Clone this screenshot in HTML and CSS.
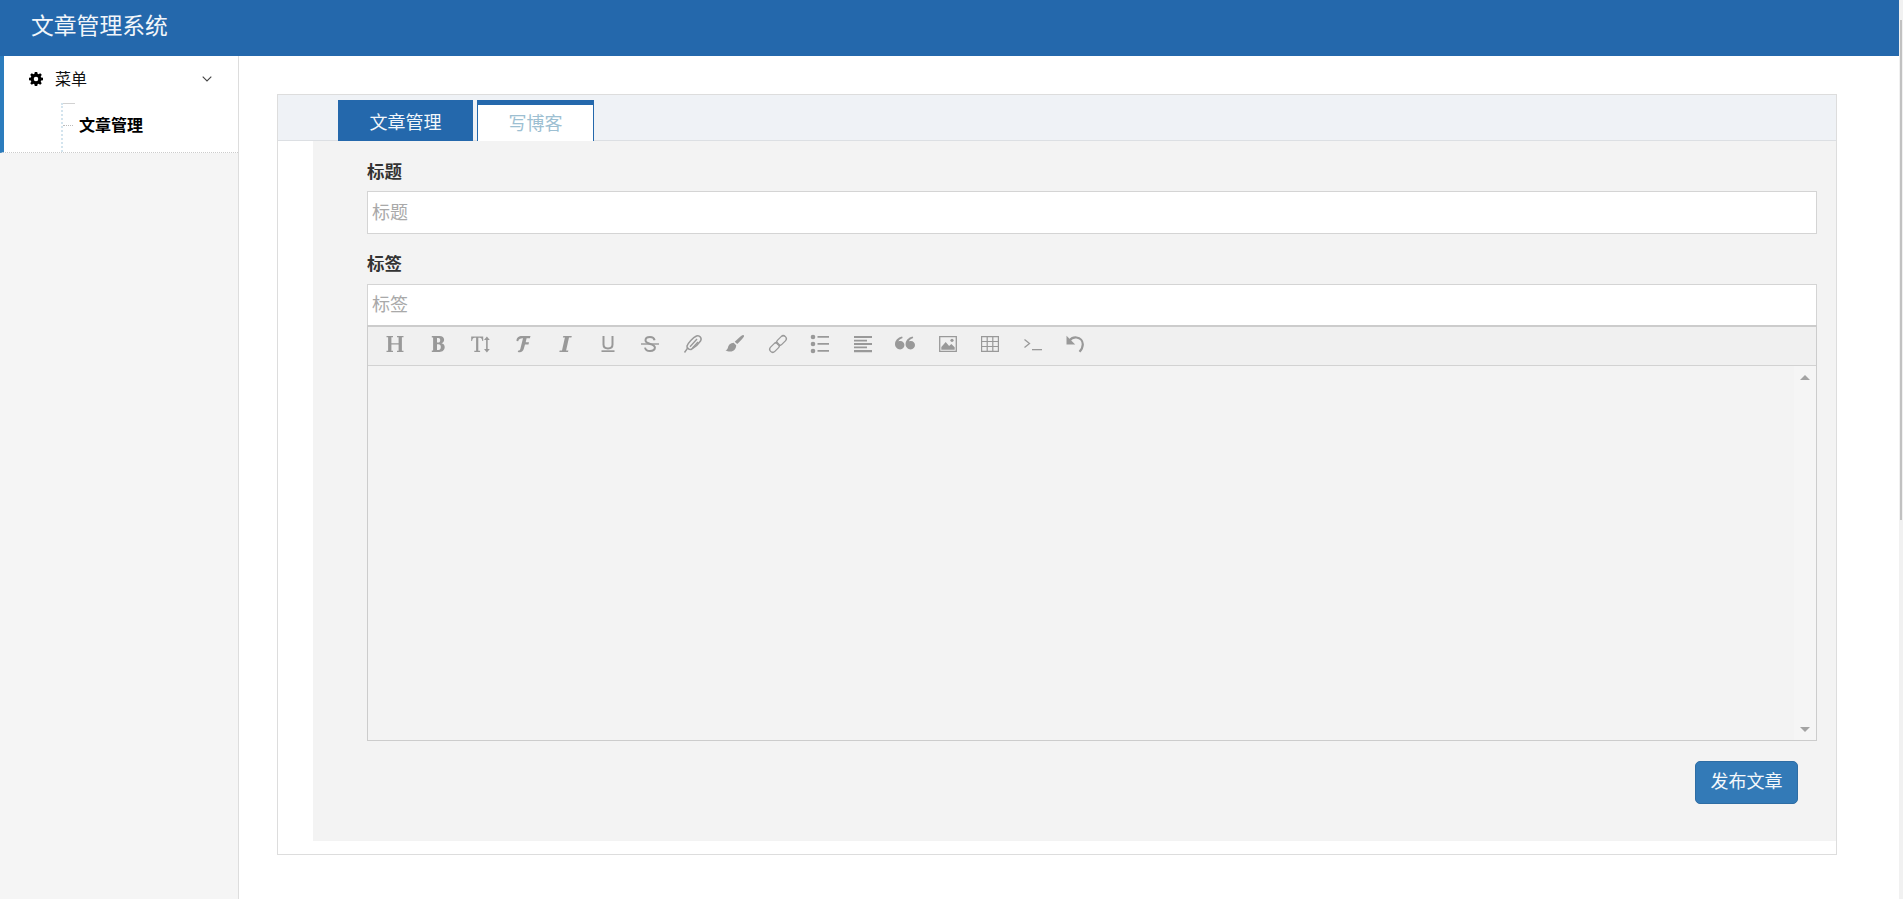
FILE: index.html
```html
<!DOCTYPE html>
<html lang="zh">
<head>
<meta charset="utf-8">
<title>文章管理系统</title>
<link rel="stylesheet" href="styles.css">
</head>
<body>
<div class="page">
  <div class="app">
    <header class="topbar"><span class="brand">文章管理系统</span></header>
    <div class="layout">
      <nav class="sidebar">
        <div class="menu">
          <div class="menu-head">
            <svg class="gear" viewBox="0 0 16 16" width="14" height="14"><path fill="#000" fill-rule="evenodd" d="M6.6 0h2.8l.4 2.1 1.2.5L12.800 1.400l1.800 1.800-1.200 1.800.5 1.200 2.100.4v2.800l-2.100.4-.5 1.200 1.200 1.800-1.800 1.800-1.800-1.200-1.200.5-.4 2.100H6.600l-.4-2.100-1.200-.5-1.800 1.200-1.800-1.800 1.200-1.800-.5-1.200L0 9.400V6.600l2.100-.4.5-1.200-1.200-1.800 1.800-1.800L5 2.600l1.200-.5zM8 5.400a2.600 2.600 0 1 0 0 5.200 2.600 2.600 0 0 0 0-5.200z"/></svg>
            <span class="menu-title">菜单</span>
            <svg class="chev" viewBox="0 0 10 6" width="10" height="6"><path d="M.7.7 5 5 9.300.7" fill="none" stroke="#444" stroke-width="1.100"/></svg>
          </div>
          <div class="tree">
            <div class="tree-cap"></div>
            <div class="tree-row"><span class="tree-tick"></span><span class="tree-link">文章管理</span></div>
          </div>
        </div>
      </nav>
      <main class="main">
        <section class="panel">
          <div class="tabs">
            <div class="tab tab-active">文章管理</div>
            <div class="tab tab-other">写博客</div>
          </div>
          <div class="tab-body">
            <form class="form">
              <label class="field-label label-first">标题</label>
              <input class="text-input input-title" placeholder="标题">
              <label class="field-label label-second">标签</label>
              <input class="text-input input-tags" placeholder="标签">
              <div class="editor">
                <div class="toolbar">
                  <span class="tool"><svg viewBox="0 0 20 20" width="20" height="20"><path d="M1.500 2h6.500v1.300H6.400v5.900h7.200V3.300H12V2h6.500v1.300h-1.600v13.400h1.600V18H12v-1.300h1.600v-6.100H6.400v6.100H8V18H1.500v-1.300h1.600V3.300H1.500z" fill="#999"/></svg></span>
                  <span class="tool"><svg viewBox="0 0 20 20" width="20" height="20"><path fill="#999" fill-rule="evenodd" d="M3.800 2h7.800c2.800 0 4.500 1.400 4.500 3.800 0 1.700-1 2.900-2.600 3.400 2 .4 3.200 1.900 3.200 3.900 0 3-2.100 4.900-5.200 4.900H3.800v-1.500h1.300V3.500H3.800zM9 4v4.600h1.200c1.300 0 2-.8 2-2.300S11.500 4 10.200 4zm0 6.300V16h1.500c1.500 0 2.300-1 2.300-2.900s-.8-2.800-2.300-2.800z"/></svg></span>
                  <span class="tool"><svg viewBox="0 0 20 20" width="20" height="20"><path fill="#999" transform="translate(1.200 0)" d="M0 2.500h12v4.500h-.9c-.3-2-1-3.200-2.600-3.200H7.100v12.900h1.800V18H3.100v-1.300h1.800V3.800H3.500C1.900 3.800 1.200 5 .9 7H0zM15.700 2.500l2.900 3.600h-2.100v8.800h2.100L15.700 18.500l-2.900-3.600h2.100V6.100h-2.100z"/></svg></span>
                  <span class="tool"><svg viewBox="0 0 20 20" width="20" height="20"><path fill="#999" d="M3.500 7C3.400 3.800 5.700 2 9 2h8.500l-.6 2.300h-3.300L12.700 8.300h3.300l-.5 2.100H12l-1.200 4.400C10.100 17 8.800 18.300 6.700 18.300c-.8 0-1.500-.2-2-.6l.9-1.400c.7.400 1.400.1 1.700-1.200L10 4.300C7.500 4.200 5.800 4.900 5.200 7.300z"/></svg></span>
                  <span class="tool"><svg viewBox="0 0 20 20" width="20" height="20"><path fill="#999" d="M8.300 2h8.500l-.4 1.600H14L11.100 16.400h2.300l-.4 1.600H4.300l.4-1.600H7L9.900 3.600H7.900z"/></svg></span>
                  <span class="tool"><svg viewBox="0 0 20 20" width="20" height="20"><path fill="none" stroke="#999" stroke-width="2" d="M5.500 2v8.500c0 2.800 1.800 3.900 4.500 3.900s4.500-1.100 4.500-3.900V2"/><path fill="#999" d="M3.500 16.300h13V18h-13z"/></svg></span>
                  <span class="tool"><svg viewBox="0 0 20 20" width="20" height="20"><path fill="none" stroke="#999" stroke-width="2" d="M14.600 6.200C14.100 4 12.300 3 10 3 7.300 3 5.500 4.200 5.500 6.300c0 4.500 9.400 2.900 9.400 7.300 0 2.100-1.900 3.400-4.900 3.400-2.600 0-4.500-1.200-5-3.400"/><path fill="#999" d="M1 9.300h18v1.400H1z"/></svg></span>
                  <span class="tool"><svg viewBox="0 0 20 20" width="20" height="20"><path fill="none" stroke="#999" stroke-width="1.500" stroke-linejoin="round" d="M4 12c1-3 6-8.500 9.500-10 1.300-.5 3 0 3.800 1 1 1.200 1 2.800.2 4-2 3-6.700 7-9.500 8.500l-2-.3-1.800-1.500z"/><path fill="none" stroke="#999" stroke-width="1.400" d="M1.500 18.500 4.700 14M7 12.800 14 5M9.500 14l5.500-6"/></svg></span>
                  <span class="tool"><svg viewBox="0 0 20 20" width="20" height="20"><path fill="#999" d="M18.700 1.200c.6.500.4 1.400-.2 2.100-1.600 1.900-4.300 5.100-6.300 6.800L9.700 7.700c1.900-2 5.200-4.800 7.100-6.300.7-.5 1.400-.7 1.900-.2zM8.700 8.800l2.500 2.500c0 3.600-2.400 6.300-5.800 6.300-2.100 0-3.800-.5-4.900-1.400 1.300-.3 2-.9 2.300-2.200.5-2.900 2.500-5.100 5.900-5.200z"/></svg></span>
                  <span class="tool"><svg viewBox="0 0 20 20" width="20" height="20"><g fill="none" stroke="#999" stroke-width="1.300"><rect x="-5.500" y="-3" width="11" height="6" rx="3" transform="translate(6.500 13.500) rotate(-45)"/><rect x="-5.500" y="-3" width="11" height="6" rx="3" transform="translate(13.500 6.500) rotate(-45)"/></g></svg></span>
                  <span class="tool"><svg viewBox="0 0 20 20" width="20" height="20"><g fill="#999"><circle cx="3" cy="3" r="2.300"/><circle cx="3" cy="10" r="2.300"/><circle cx="3" cy="17" r="2.300"/><path d="M7.500 2H19v1.800H7.500zM7.500 9H19v1.800H7.500zM7.500 16H19v1.800H7.500z"/></g></svg></span>
                  <span class="tool"><svg viewBox="0 0 20 20" width="20" height="20"><path fill="#999" d="M1 2h18v2H1zM1 5.800h13v1.600H1zM1 9.100h18v1.800H1zM1 12.600h13v1.600H1zM1 16h18v2.200H1z"/></svg></span>
                  <span class="tool"><svg viewBox="1 2 18 18" width="20" height="20"><path fill="#999" d="M5.800 8.300c2.100 0 3.700 1.500 3.700 3.700 0 2.300-1.600 3.900-3.900 3.900C3.100 15.900 1 14 1 11.100 1 7.900 3.500 5 7.400 4.200l.5 1.400c-2.100.7-3.400 1.700-3.800 3.100.5-.3 1-.4 1.700-.4zM15.300 8.300c2.100 0 3.700 1.500 3.700 3.700 0 2.300-1.600 3.900-3.900 3.900-2.500 0-4.600-1.900-4.600-4.800 0-3.200 2.500-6.100 6.400-6.900l.5 1.400c-2.100.7-3.400 1.700-3.800 3.100.5-.3 1-.4 1.700-.4z"/></svg></span>
                  <span class="tool"><svg viewBox="0 0 20 20" width="20" height="20"><path fill="none" stroke="#999" stroke-width="1.300" d="M1.700 2.700h16.600v14.600H1.700z"/><path fill="#999" d="M3.300 15.700v-2.600l4.400-5 3.400 3.800 2.200-1.800 3.400 3.200v2.400z"/><circle cx="14" cy="6.300" r="1.600" fill="#999"/></svg></span>
                  <span class="tool"><svg viewBox="0 0 20 20" width="20" height="20"><path fill="none" stroke="#999" stroke-width="1.200" d="M1.600 2.600h16.800v14.800H1.600zM1.600 7.500h16.800M1.600 12.500h16.800M7.200 2.600v14.800M12.800 2.600v14.800"/></svg></span>
                  <span class="tool"><svg viewBox="0 0 20 20" width="20" height="20"><path fill="none" stroke="#999" stroke-width="1.300" d="M1.500 5.500 6.500 9.500 1.500 13.500"/><path fill="#999" d="M9 15h10v1.300H9z"/></svg></span>
                  <span class="tool"><svg viewBox="0 0 20 20" width="20" height="20"><path fill="none" stroke="#999" stroke-width="2.200" d="M4.500 6.500C6.500 4 9 3.200 11.500 3.500c3.700.5 6.300 3.300 6.300 6.800 0 2.800-1.200 5.300-3.300 7.500"/><path fill="#999" d="M1.500 1.800v8.700h8.700z"/></svg></span>
                </div>
                <div class="edit-area">
                  <div class="edit-space"></div>
                  <div class="edit-scroll"><span class="arrow-up"></span><span class="arrow-down"></span></div>
                </div>
              </div>
              <div class="actions"><button type="button" class="publish">发布文章</button></div>
            </form>
          </div>
        </section>
      </main>
    </div>
  </div>
  <div class="scrollbar"><div class="thumb"></div></div>
</div>
</body>
</html>
```
FILE: styles.css
```css
* { box-sizing: border-box; }
html, body { margin: 0; height: 100%; overflow: hidden; }
body { background: #fff; font-family: "Noto Sans CJK SC", "Liberation Sans", sans-serif; color: #333; }

.page { display: flex; height: 899px; }
.app { width: 1899px; display: flex; flex-direction: column; }

.topbar { height: 56px; background: #2468ac; padding: 0 0 6px 31px; display: flex; align-items: center; flex: none; }
.brand { color: #f2f6fa; font-size: 22.8px; line-height: 1; }

.scrollbar { width: 4px; background: #f1f1f1; padding: 20px 1px 0; }
.thumb { height: 500px; background: #c1c1c1; }

.layout { flex: 1; display: flex; min-height: 0; }

.sidebar { width: 239px; flex: none; background: #f5f5f5; border-right: 1px solid #ddd; }
.menu { height: 97px; background: #fff; border-left: 4px solid #2b7cbd; border-bottom: 1px dotted #ccc; }
.menu-head { height: 47px; display: flex; align-items: center; padding: 0 26px 1px 25px; }
.gear { flex: none; }
.menu-title { margin-left: 12px; margin-bottom: 3px; font-size: 16px; color: #111; flex: 1; line-height: 1; }
.tree { margin-left: 57px; height: 49px; border-left: 2px dotted #d3e4ee; }
.tree-cap { width: 12px; border-top: 1px solid #d2d2d2; }
.tree-row { display: flex; align-items: center; height: 43px; }
.tree-tick { width: 10px; border-top: 1px dotted #bbb; margin-right: 6px; }
.tree-link { font-size: 16px; font-weight: 700; color: #000; line-height: 1; margin-bottom: 4px; }

.main { flex: 1; padding: 38px 62px 0 38px; }

.panel { height: 761px; border: 1px solid #ddd; display: flex; flex-direction: column; }
.tabs { height: 46px; flex: none; background: #eff2f6; border-bottom: 1px solid #dcdfe3; display: flex; gap: 4px; padding: 5px 0 0 60px; }
.tab { font-size: 18px; line-height: 1; height: 41px; display: flex; align-items: center; justify-content: center; }
.tab-active { width: 135px; background: #2468ac; color: #f2f6fa; }
.tab-other { width: 117px; background: #fff; color: #9dbfd2; border: 1px solid #2468ac; border-top-width: 5px; border-bottom: 0; padding-bottom: 2px; }

.tab-body { margin-left: 35px; height: 700px; background: #f3f3f3; flex: none; }
.form { padding: 0 19px 0 54px; display: flex; flex-direction: column; }
.field-label { font-size: 17.5px; font-weight: 700; line-height: 1; color: #333; display: block; }
.label-first { margin-top: 21px; margin-bottom: 11.5px; }
.label-second { margin-top: 20px; margin-bottom: 12.5px; }
.text-input { display: block; width: 100%; background: #fff; border: 1px solid #d4d4d4; padding: 0 4px 3px; font: inherit; font-size: 18px; color: #333; outline: 0; }
.text-input::placeholder { color: #a9a9a9; opacity: 1; }
.input-title { height: 43px; }
.input-tags { height: 41px; border-bottom: 0; padding-bottom: 4px; }

.editor { border: 1px solid #ccc; border-top-width: 2px; display: flex; flex-direction: column; }
.toolbar { height: 39px; background: #f0f0f0; border-bottom: 1px solid #d2d2d2; display: flex; align-items: center; padding: 0 0 4px 6px; }
.tool { width: 42.5px; flex: none; display: flex; justify-content: center; align-items: center; }
.edit-area { height: 374px; display: flex; background: #f3f3f3; }
.edit-space { flex: 1; }
.edit-scroll { width: 22px; background: #f5f5f5; display: flex; flex-direction: column; justify-content: space-between; align-items: center; padding: 9px 0 8px; }
.arrow-up { width: 0; height: 0; border: 5px solid transparent; border-top: 0; border-bottom: 5px solid #a3a3a3; }
.arrow-down { width: 0; height: 0; border: 5px solid transparent; border-bottom: 0; border-top: 5px solid #a3a3a3; }

.actions { display: flex; justify-content: flex-end; padding: 20px 19px 0 0; }
.publish { width: 103px; height: 43px; background: #337ab7; border: 1px solid #2e6da4; border-radius: 5px; color: #f4f8fb; font: inherit; font-size: 18px; line-height: 1; padding: 0 0 5px; }
```
